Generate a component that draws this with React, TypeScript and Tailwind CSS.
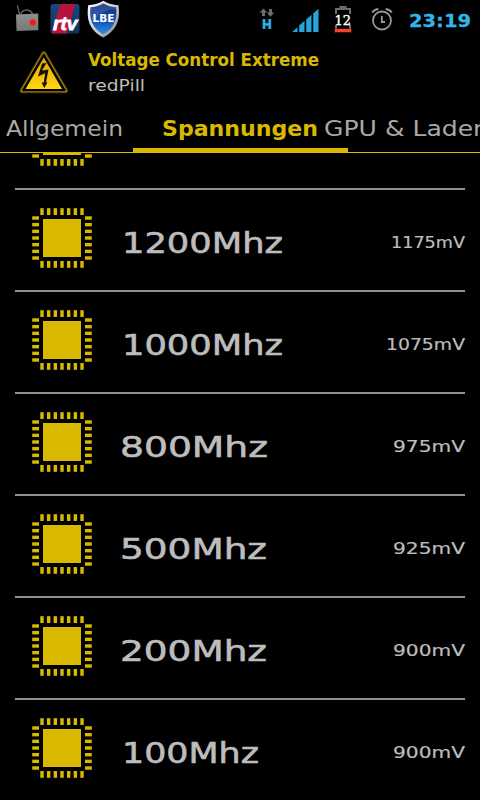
import { useLayoutEffect, useRef } from 'react'
import clsx from 'clsx'

interface Voltage {
  freq: string
  freqWidth: number
  indent: number
  value: string
  valueWidth: number
}

const voltages: Voltage[] = [
  { freq: '1200Mhz', freqWidth: 161, indent: 30, value: '1175mV', valueWidth: 74 },
  { freq: '1000Mhz', freqWidth: 161, indent: 30, value: '1075mV', valueWidth: 79 },
  { freq: '800Mhz', freqWidth: 148, indent: 28, value: '975mV', valueWidth: 72 },
  { freq: '500Mhz', freqWidth: 147, indent: 28, value: '925mV', valueWidth: 72 },
  { freq: '200Mhz', freqWidth: 147, indent: 28, value: '900mV', valueWidth: 72 },
  { freq: '100Mhz', freqWidth: 137, indent: 30, value: '900mV', valueWidth: 72 },
]

// Text stretched horizontally to a fixed width, for the wide display look
function WideText({ width, className, children }: { width: number; className?: string; children: string }) {
  const ref = useRef<HTMLSpanElement>(null)

  useLayoutEffect(() => {
    const el = ref.current
    if (!el) return
    el.style.transform = 'none'
    el.style.transform = `scaleX(${width / el.getBoundingClientRect().width})`
  }, [width, children])

  return (
    <span className={clsx('block shrink-0 whitespace-nowrap', className)} style={{ width }}>
      <span ref={ref} className="inline-block origin-left align-top">
        {children}
      </span>
    </span>
  )
}

function ChipIcon() {
  const pins = [0, 1, 2, 3, 4, 5, 6].map((i) => 8.3 + i * 6.67)
  return (
    <svg width="60" height="60" viewBox="0 0 60 60" fill="#d9b900" className="shrink-0">
      <rect x="11" y="11" width="38" height="38" />
      {pins.map((p) => (
        <g key={p}>
          <rect x={p} y="0.2" width="3.4" height="6.8" />
          <rect x={p} y="53" width="3.4" height="6.8" />
          <rect x="0.2" y={p} width="6.8" height="3.4" />
          <rect x="53" y={p} width="6.8" height="3.4" />
        </g>
      ))}
    </svg>
  )
}

function RadioIcon() {
  return (
    <svg width="50" height="40" viewBox="0 0 50 40">
      <defs>
        <linearGradient id="radio" x1="0" y1="0" x2="0" y2="1">
          <stop offset="0" stopColor="#8f8f8f" />
          <stop offset="1" stopColor="#777" />
        </linearGradient>
      </defs>
      <path d="M17.3 5.5L19.8 15" stroke="#666" strokeWidth="1.3" />
      <path d="M20.5 15C22 8.5 30.5 8.5 32.5 14" fill="none" stroke="#626262" strokeWidth="1.5" />
      <path d="M16 14.5L38.3 13.5V30.3L16.5 31Z" fill="url(#radio)" />
      <circle cx="32.7" cy="22.5" r="3.4" fill="#c94a40" />
      <circle cx="32.7" cy="22.5" r="2.5" fill="#ff1210" />
    </svg>
  )
}

function RtvIcon() {
  return (
    <svg width="30" height="40" viewBox="50 0 30 40">
      <defs>
        <clipPath id="rtv">
          <rect x="50.5" y="4" width="29" height="29.5" rx="2.5" />
        </clipPath>
        <linearGradient id="rtvShade" x1="0" y1="0" x2="0" y2="1">
          <stop offset="0" stopColor="#19487c" />
          <stop offset="1" stopColor="#0c3261" />
        </linearGradient>
      </defs>
      <g clipPath="url(#rtv)">
        <rect x="50" y="4" width="30" height="30" fill="url(#rtvShade)" />
        <path d="M60.5 4H75L67 34H51Z" fill="#b8123f" />
      </g>
      <text
        x="53"
        y="29.5"
        fill="#fff"
        stroke="#fff"
        strokeWidth="0.8"
        fontFamily="Liberation Sans, sans-serif"
        fontWeight="bold"
        fontStyle="italic"
        fontSize="19"
        textLength="24.5"
        lengthAdjust="spacingAndGlyphs"
      >
        rtv
      </text>
    </svg>
  )
}

function ShieldIcon() {
  return (
    <svg width="40" height="40" viewBox="82 0 40 40">
      <defs>
        <linearGradient id="shield" x1="0" y1="0" x2="0" y2="1">
          <stop offset="0" stopColor="#0c2f7c" />
          <stop offset="0.55" stopColor="#174fae" />
          <stop offset="1" stopColor="#2b93e6" />
        </linearGradient>
        <linearGradient id="rim" x1="0" y1="0" x2="1" y2="1">
          <stop offset="0" stopColor="#fff" />
          <stop offset="0.6" stopColor="#c4c4c4" />
          <stop offset="1" stopColor="#777" />
        </linearGradient>
      </defs>
      <path
        d="M103.3 0.8C98.5 4 93 5 88.2 5.2C86.8 17 87.5 29 103.3 37.5C119 29 120 17 118.5 5.2C113.5 5 108 4 103.3 0.8Z"
        fill="url(#rim)"
      />
      <path
        d="M103.3 3.5C99 6 94.5 7 90.5 7.3C89.6 17 90.5 27 103.3 34.5C116 27 117 17 116.2 7.3C112 7 107.5 6 103.3 3.5Z"
        fill="url(#shield)"
      />
      <path
        d="M103.3 3.5C99 6 94.5 7 90.5 7.3C90 14 91 19 93 23C97 14 105 10 116 9V7.3C112 7 107.5 6 103.3 3.5Z"
        fill="#fff"
        opacity="0.12"
      />
      <text
        x="92.5"
        y="22"
        fill="#fff"
        fontFamily="DejaVu Sans, sans-serif"
        fontWeight="bold"
        fontSize="11"
        textLength="22"
        lengthAdjust="spacingAndGlyphs"
      >
        LBE
      </text>
    </svg>
  )
}

function DataIcon() {
  return (
    <svg width="18" height="40" viewBox="258 0 18 40">
      <path d="M263.5 8.5L267.2 12.5H265V16H262V12.5H259.5Z" fill="#6b6b6b" />
      <path d="M270.5 16.7L266.7 12.5H269V9H272V12.5H274.3Z" fill="#6b6b6b" />
      <path d="M264 19V29M269.7 19V29M264 24.3H269.7" stroke="#0b587c" strokeWidth="4.5" opacity="0.45" />
      <path d="M264 19V29M269.7 19V29M264 24.3H269.7" stroke="#33b5e5" strokeWidth="2.3" />
    </svg>
  )
}

function SignalIcon() {
  return (
    <svg width="27" height="40" viewBox="291.5 0 27 40" fill="#24a5d8">
      <path d="M291.7 32L297 27.3V32Z" />
      <path d="M298.7 32V25.5L304 20.8V32Z" />
      <path d="M305.7 32V19.5L311 14.8V32Z" />
      <path d="M312.7 32V13.5L318 8.8V32Z" />
    </svg>
  )
}

function BatteryIcon() {
  return (
    <svg width="20" height="40" viewBox="333 0 20 40">
      <path d="M339.5 6H346.5V8H351V29H335V8H339.5Z" fill="#6c6c6c" />
      <rect x="337" y="10" width="12" height="19" fill="#000" />
      <rect x="334" y="28.3" width="18" height="5" rx="1" fill="#6e1c10" opacity="0.6" />
      <rect x="335" y="29" width="16" height="3" fill="#ee452c" />
      <rect x="335" y="14" width="16" height="11" fill="#000" />
      <text
        x="334.5"
        y="24.5"
        fill="#fff"
        stroke="#fff"
        strokeWidth="0.4"
        fontFamily="DejaVu Serif, serif"
        fontSize="13"
        textLength="16.5"
        lengthAdjust="spacingAndGlyphs"
      >
        12
      </text>
    </svg>
  )
}

function AlarmIcon() {
  return (
    <svg width="24" height="40" viewBox="369.5 0 24 40" fill="none" stroke="#979797">
      <circle cx="381.5" cy="20.5" r="9" strokeWidth="1.8" />
      <path d="M381.3 16V22H384.5" strokeWidth="1.8" />
      <path d="M371.7 12.5C373 10.5 375 9.3 377.8 8.9M391.3 12.5C390 10.5 388 9.3 385.2 8.9" strokeWidth="2" />
    </svg>
  )
}

function WarningIcon() {
  return (
    <svg width="50" height="48" viewBox="19 49 50 48" className="shrink-0">
      <defs>
        <linearGradient id="warn" x1="0" y1="0" x2="0" y2="1">
          <stop offset="0" stopColor="#e3a30a" />
          <stop offset="1" stopColor="#ffd60a" />
        </linearGradient>
      </defs>
      <path d="M43.8 53.5L65.5 90.7H22.2Z" fill="#000" stroke="#5a4805" strokeWidth="5" strokeLinejoin="round" />
      <path d="M43.8 53.8L65.5 90.5H22.2Z" fill="#000" stroke="#a98908" strokeWidth="3" strokeLinejoin="round" />
      <path d="M43.8 54.5L64.8 90.3H22.9Z" fill="#000" stroke="#000" strokeWidth="1.8" strokeLinejoin="round" />
      <path d="M43.8 57.5L62 89H25.5Z" fill="url(#warn)" />
      <path
        d="M42 63.5L46.5 63L42 70.5L48.5 69.5L46 82.5L47.5 82.2L44.3 88L41.5 82.3L43.7 82.7L45.2 73.2L38 76.5Z"
        fill="#141000"
      />
    </svg>
  )
}

function StatusBar() {
  return (
    <div className="flex h-10 items-center pr-[9px]">
      <RadioIcon />
      <RtvIcon />
      <div className="ml-0.5">
        <ShieldIcon />
      </div>
      <div className="ml-auto flex items-center">
        <DataIcon />
        <div className="ml-4">
          <SignalIcon />
        </div>
        <div className="ml-3.5">
          <BatteryIcon />
        </div>
        <div className="ml-[17px]">
          <AlarmIcon />
        </div>
        <WideText
          width={62}
          className="ml-[15px] text-[18px] leading-[41px] font-bold text-[#33b5e5] [-webkit-text-stroke:0.3px_#33b5e5]"
        >
          23:19
        </WideText>
      </div>
    </div>
  )
}

export default function App() {
  return (
    <div className="flex h-[800px] w-[480px] flex-col overflow-hidden bg-black font-['DejaVu_Sans',sans-serif] text-[#bdbdbd]">
      <StatusBar />

      {/* Header */}
      <header className="flex h-16 pl-[19px]">
        <div className="mt-[9px]">
          <WarningIcon />
        </div>
        <div className="ml-[19px] pt-2">
          <WideText width={231} className="h-[25px] text-[17px] leading-[25px] font-bold text-[#d9b900]">
            Voltage Control Extreme
          </WideText>
          <WideText width={57} className="h-6 text-[16px] leading-[26px]">
            redPill
          </WideText>
        </div>
      </header>

      {/* Tabs */}
      <nav className="flex h-[49px] shrink-0 border-b border-[#d9b900] text-[20.5px] leading-[50px]">
        <WideText width={117} className="ml-1.5 text-[#a8a8a8]">
          Allgemein
        </WideText>
        <div className="-mb-px ml-[10px] h-[49px] w-[215px] shrink-0 border-b-[5px] border-[#d9b900] pl-[29px]">
          <WideText width={156} className="font-bold text-[#d9b900]">
            Spannungen
          </WideText>
        </div>
        <WideText width={165} className="-ml-6 text-[#a8a8a8]">
          GPU & Laden
        </WideText>
      </nav>

      {/* Voltage list, scrolled so the first row is mostly hidden */}
      <main className="min-h-0 flex-1 overflow-hidden px-[15px]">
        <div className="-mt-[65px] h-[102px] border-b-2 border-[#8f8f8f] pt-[18px] pl-[17px]">
          <ChipIcon />
        </div>
        {voltages.map((v) => (
          <div key={v.freq} className="flex h-[102px] border-b-2 border-[#8f8f8f] pl-[17px]">
            <div className="mt-[18px]">
              <ChipIcon />
            </div>
            <div style={{ marginLeft: v.indent }}>
              <WideText width={v.freqWidth} className="text-[28.8px] leading-[106px] [-webkit-text-stroke:0.6px_#bdbdbd]">
                {v.freq}
              </WideText>
            </div>
            <WideText width={v.valueWidth} className="ml-auto text-[16.5px] leading-[106px] [-webkit-text-stroke:0.2px_#bdbdbd]">
              {v.value}
            </WideText>
          </div>
        ))}
      </main>
    </div>
  )
}
